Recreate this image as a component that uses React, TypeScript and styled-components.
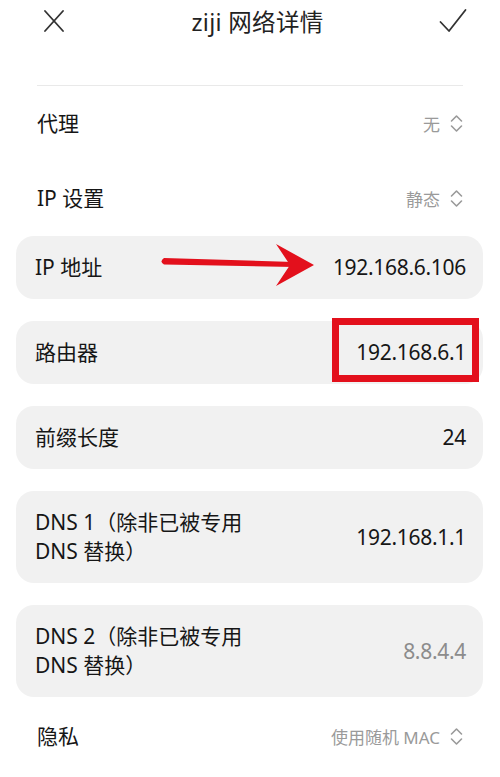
import React from "react";
import styled, { createGlobalStyle } from "styled-components";

const Global = createGlobalStyle`
  html, body { margin: 0; padding: 0; background: #ffffff; }
  body { font-family: "Noto Sans", "Noto Sans CJK SC", sans-serif; color: #161616; }
`;

const Page = styled.div`
  width: 500px;
  height: 777px;
  overflow: hidden;
  background: #fff;
  display: flex;
  flex-direction: column;
`;

const Header = styled.div`
  height: 42px;
  padding: 0 33px 0 40px;
  display: flex;
  align-items: center;
  justify-content: space-between;
`;

const Title = styled.div`
  font-size: 23.5px;
  color: #222;
  letter-spacing: 0.3px;
  margin-left: 8px;
`;

const IconButton = styled.div`
  width: 28px;
  height: 28px;
  display: flex;
  align-items: center;
  justify-content: center;
`;

const Divider = styled.div`
  margin: 44px 37px 0 37px;
  height: 1px;
  background: #e9e9e9;
`;

const PlainRow = styled.div<{ $h: number }>`
  height: ${(p) => p.$h}px;
  padding: 0 37px;
  display: flex;
  align-items: center;
  justify-content: space-between;
`;

const Label = styled.div`
  font-size: 21px;
  line-height: 29px;
  color: #161616;
  max-width: 225px;
`;

const Picker = styled.div`
  display: flex;
  align-items: center;
  gap: 10px;
  font-size: 17px;
  color: #9a9a9a;
`;

const Cards = styled.div`
  display: flex;
  flex-direction: column;
  gap: 22px;
  padding: 0 17px 0 16px;
`;

const Card = styled.div<{ $h: number }>`
  position: relative;
  height: ${(p) => p.$h}px;
  border-radius: 18px;
  background: #f1f1f1;
  padding: 0 17px 0 19px;
  display: flex;
  align-items: center;
  justify-content: space-between;
`;

const Value = styled.div<{ $muted?: boolean }>`
  font-size: 21px;
  letter-spacing: -0.3px;
  color: ${(p) => (p.$muted ? "#8c8c8c" : "#161616")};
`;

const Arrow = styled.svg`
  position: absolute;
  left: 140px;
  top: 6px;
`;

const Highlight = styled.div`
  position: absolute;
  left: 316px;
  top: -3px;
  width: 147px;
  height: 64px;
  box-sizing: border-box;
  border: 7px solid #e3101c;
`;

const UpDown = () => (
  <svg width="13" height="19" viewBox="0 0 13 19" fill="none" stroke="#9a9a9a" strokeWidth="1.6" strokeLinecap="round" strokeLinejoin="round">
    <path d="M1.5 7 L6.5 2 L11.5 7" />
    <path d="M1.5 12 L6.5 17 L11.5 12" />
  </svg>
);

export default function App() {
  return (
    <Page>
      <Global />
      <Header>
        <IconButton>
          <svg width="22" height="22" viewBox="0 0 22 22" stroke="#333" strokeWidth="1.8" strokeLinecap="round">
            <path d="M2 1 L20 21" />
            <path d="M20 1 L2 21" />
          </svg>
        </IconButton>
        <Title>ziji 网络详情</Title>
        <IconButton>
          <svg width="28" height="26" viewBox="0 0 28 26" fill="none" stroke="#333" strokeWidth="1.8" strokeLinecap="round" strokeLinejoin="round">
            <path d="M1.5 14 L10 23 L26.5 2" />
          </svg>
        </IconButton>
      </Header>
      <Divider />
      <PlainRow $h={76}>
        <Label>代理</Label>
        <Picker>
          无
          <UpDown />
        </Picker>
      </PlainRow>
      <PlainRow $h={77}>
        <Label>IP 设置</Label>
        <Picker>
          静态
          <UpDown />
        </Picker>
      </PlainRow>
      <Cards>
        <Card $h={63}>
          <Label>IP 地址</Label>
          <Value>192.168.6.106</Value>
          <Arrow width="170" height="50" viewBox="0 0 170 50">
            <path d="M8 16 L138 20 L138 25 L8 22.5 Q3 19.5 8 16 Z" fill="#e3101c" />
            <path d="M120 2 L158 23 L120 44 L134 23 Z" fill="#e3101c" />
          </Arrow>
        </Card>
        <Card $h={63}>
          <Label>路由器</Label>
          <Value>192.168.6.1</Value>
          <Highlight />
        </Card>
        <Card $h={63}>
          <Label>前缀长度</Label>
          <Value>24</Value>
        </Card>
        <Card $h={92}>
          <Label>DNS 1（除非已被专用 DNS 替换）</Label>
          <Value>192.168.1.1</Value>
        </Card>
        <Card $h={92}>
          <Label>DNS 2（除非已被专用 DNS 替换）</Label>
          <Value $muted>8.8.4.4</Value>
        </Card>
      </Cards>
      <PlainRow $h={82}>
        <Label>隐私</Label>
        <Picker>
          使用随机 MAC
          <UpDown />
        </Picker>
      </PlainRow>
    </Page>
  );
}
